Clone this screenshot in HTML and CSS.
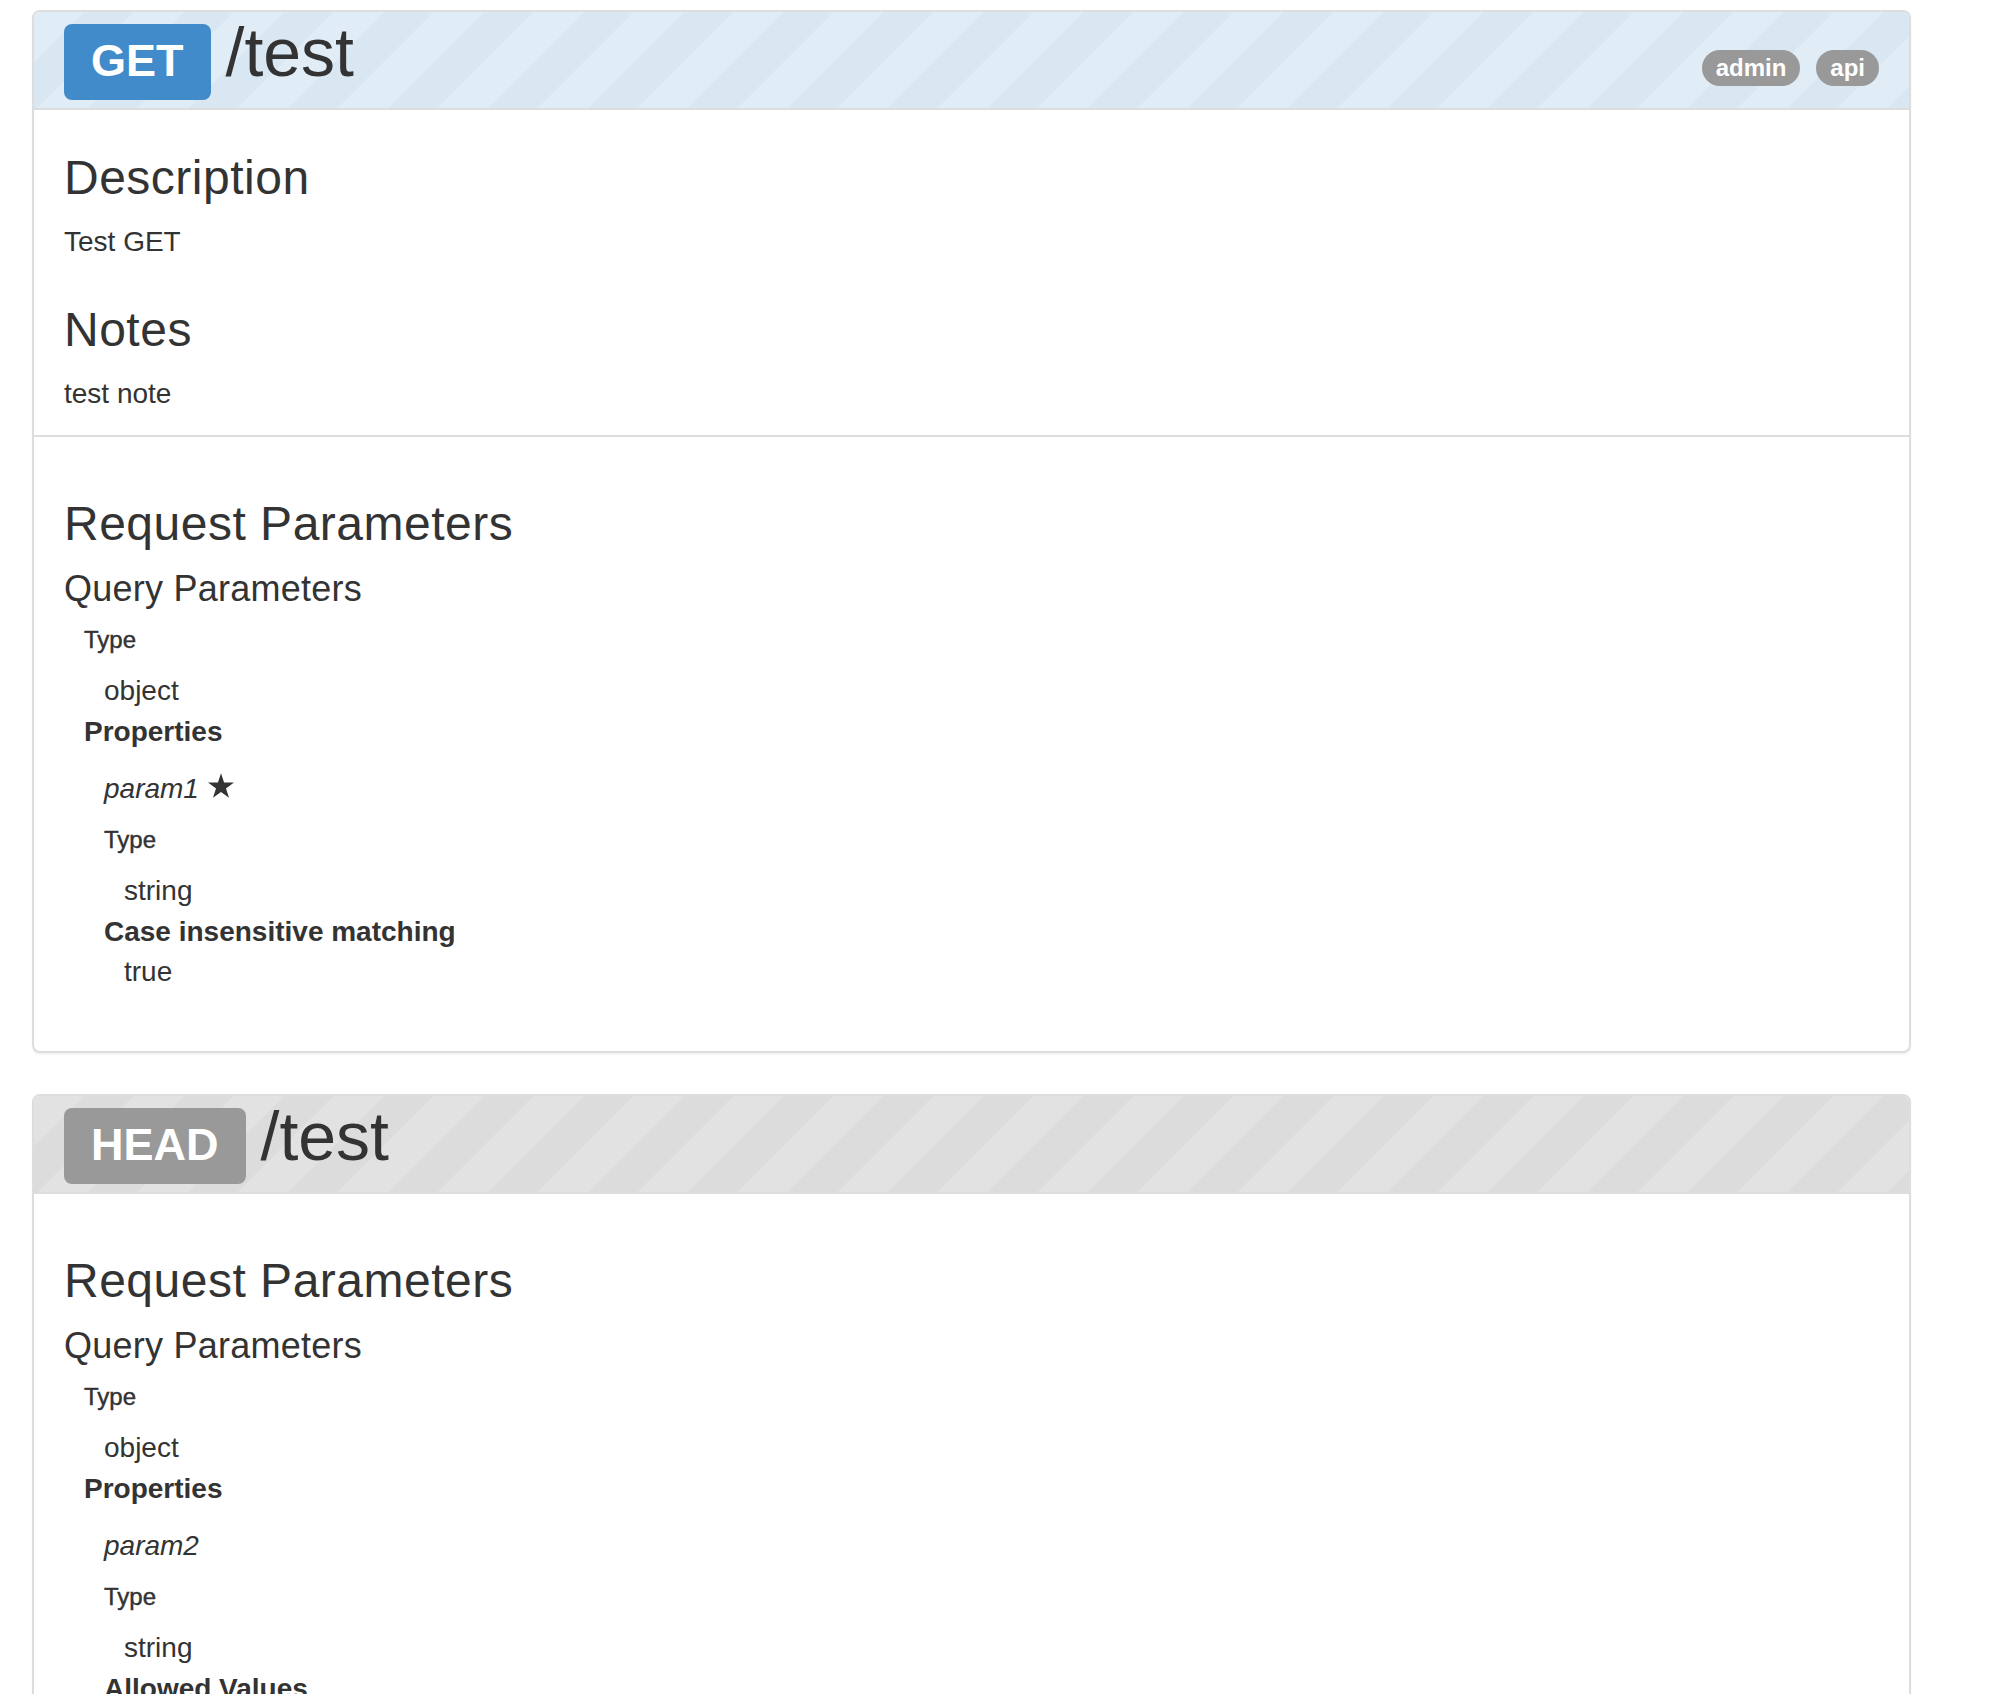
FILE: index.html
```html
<!DOCTYPE html>
<html>
<head>
<meta charset="utf-8">
<title>API</title>
<link rel="stylesheet" href="styles.css">
</head>
<body>
<div class="page">
  <div class="panel">
    <div class="panel-heading heading-get">
      <span class="method method-get">GET</span>
      <span class="path">/test</span>
      <span class="tags"><span class="tag">admin</span><span class="tag">api</span></span>
    </div>
    <div class="section intro">
      <h3 class="title">Description</h3>
      <p class="text first">Test GET</p>
      <h3 class="title spaced">Notes</h3>
      <p class="text first">test note</p>
    </div>
    <div class="section params">
      <h3 class="title">Request Parameters</h3>
      <h4 class="subtitle">Query Parameters</h4>
      <div class="schema root">
        <div class="label">Type</div>
        <div class="value">object</div>
        <div class="strong">Properties</div>
        <div class="prop">
          <div class="pname"><em>param1</em> <svg class="star" viewBox="0 0 100 95" width="26" height="25"><polygon points="50,0 61.8,36.3 100,36.3 69.1,58.8 80.9,95 50,72.7 19.1,95 30.9,58.8 0,36.3 38.2,36.3" fill="#333"/></svg></div>
          <div class="label">Type</div>
          <div class="value">string</div>
          <div class="strong">Case insensitive matching</div>
          <div class="value">true</div>
        </div>
      </div>
    </div>
  </div>

  <div class="panel">
    <div class="panel-heading heading-head">
      <span class="method method-head">HEAD</span>
      <span class="path">/test</span>
    </div>
    <div class="section params">
      <h3 class="title">Request Parameters</h3>
      <h4 class="subtitle">Query Parameters</h4>
      <div class="schema root">
        <div class="label">Type</div>
        <div class="value">object</div>
        <div class="strong">Properties</div>
        <div class="prop">
          <div class="pname"><em>param2</em></div>
          <div class="label">Type</div>
          <div class="value">string</div>
          <div class="strong">Allowed Values</div>
          <div class="value">a</div>
          <div class="value">b</div>
        </div>
      </div>
    </div>
  </div>
</div>
</body>
</html>
```

FILE: styles.css
```css
html, body {
  margin: 0;
  padding: 0;
  background: #fff;
}
body {
  font-family: "Liberation Sans", Arial, sans-serif;
  color: #333;
}
.page {
  width: 1879px;
  margin-left: 32px;
  padding-top: 10px;
}
.panel {
  border: 2px solid #ddd;
  border-radius: 8px;
  margin-bottom: 41px;
  background: #fff;
  box-shadow: 0 2px 2px rgba(0, 0, 0, 0.05);
  overflow: hidden;
}
.panel-heading {
  box-sizing: border-box;
  height: 98px;
  padding: 12px 30px 0 30px;
  border-bottom: 2px solid #ddd;
  display: flex;
  align-items: baseline;
}
.heading-get {
  background: repeating-linear-gradient(135deg, #e0ecf6 0 35.36px, #d9e7f3 35.36px 70.71px);
}
.heading-head {
  background: repeating-linear-gradient(135deg, #e2e2e2 0 35.36px, #dcdcdc 35.36px 70.71px);
}
.method {
  box-sizing: border-box;
  height: 76px;
  line-height: 74px;
  padding: 0 27px 2px 27px;
  border-radius: 8px;
  color: #fff;
  font-weight: bold;
  font-size: 45px;
}
.method-get { background: #428bca; }
.method-head { background: #999; }
.path {
  margin-left: 15px;
  font-size: 68px;
  line-height: 56px;
  color: #333;
}
.tags {
  margin-left: auto;
  display: flex;
  align-items: baseline;
}
.tag {
  display: inline-block;
  background: #999;
  color: #fff;
  font-weight: bold;
  font-size: 24px;
  line-height: 24px;
  padding: 6px 14px;
  border-radius: 18px;
}
.tag + .tag { margin-left: 16px; }

.section {
  padding: 0 30px;
}
.intro {
  padding-top: 41px;
  padding-bottom: 21px;
  border-bottom: 2px solid #ddd;
}
.params {
  padding-top: 60px;
  padding-bottom: 59px;
}
.title {
  margin: 0;
  font-size: 48px;
  line-height: 53px;
  font-weight: normal;
  letter-spacing: 0.5px;
}
.title.spaced { margin-top: 41px; }
.text {
  margin: 18px 0 0 0;
  font-size: 28px;
  line-height: 40px;
}
.subtitle {
  margin: 19px 0 0 0;
  font-size: 36px;
  line-height: 40px;
  font-weight: normal;
  letter-spacing: 0.25px;
}
.schema.root {
  padding-left: 20px;
}
.label {
  margin: 16px 0 17px 0;
  font-size: 24px;
  line-height: 29px;
  -webkit-text-stroke: 0.45px #333;
}
.value {
  padding-left: 20px;
  font-size: 28px;
  line-height: 40px;
}
.strong {
  margin-top: 1px;
  font-size: 28px;
  line-height: 40px;
  font-weight: bold;
}
.prop {
  padding-left: 20px;
  margin-top: 17px;
}
.pname {
  font-size: 28px;
  line-height: 40px;
}
.pname em { font-style: italic; }
.star {
  vertical-align: baseline;
  margin-left: 1px;
}
```
